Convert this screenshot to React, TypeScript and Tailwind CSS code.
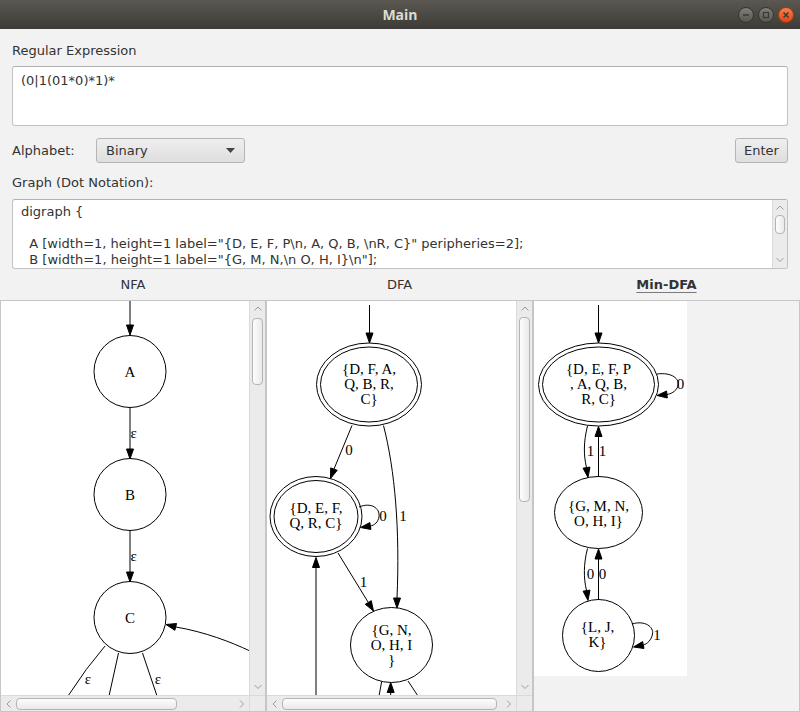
import React from 'react'

const serif = 'Liberation Serif, Times New Roman, serif'

function Arrow({ x, y, dx, dy }: { x: number; y: number; dx: number; dy: number }) {
  const len = Math.hypot(dx, dy)
  const ux = dx / len
  const uy = dy / len
  const bx = x - ux * 10
  const by = y - uy * 10
  const px = -uy * 3.5
  const py = ux * 3.5
  return (
    <polygon
      points={`${x},${y} ${bx + px},${by + py} ${bx - px},${by - py}`}
      fill="black"
      stroke="black"
      strokeWidth={1}
    />
  )
}

function Label({ x, y, children, anchor = 'middle' }: { x: number; y: number; children: React.ReactNode; anchor?: 'middle' | 'start' }) {
  return (
    <text x={x} y={y} textAnchor={anchor} fontFamily={serif} fontSize={15} fill="black" stroke="none">
      {children}
    </text>
  )
}

function Lines({ x, y, lines }: { x: number; y: number; lines: string[] }) {
  return (
    <>
      {lines.map((l, i) => (
        <Label key={i} x={x} y={y + i * 15}>{l}</Label>
      ))}
    </>
  )
}

function Chevron({ dir }: { dir: 'up' | 'down' | 'left' | 'right' }) {
  const pts = {
    up: '0.5,4.5 4,1 7.5,4.5',
    down: '0.5,1 4,4.5 7.5,1',
    left: '4.5,0.5 1,4 4.5,7.5',
    right: '1,0.5 4.5,4 1,7.5',
  }[dir]
  const vertical = dir === 'up' || dir === 'down'
  return (
    <svg width={vertical ? 8 : 6} height={vertical ? 6 : 8}>
      <polyline points={pts} fill="none" stroke="#9c9c9c" strokeWidth={1} />
    </svg>
  )
}

function VScroll({ thumb, outer = 'w-[16px]' }: { thumb: string; outer?: string }) {
  return (
    <div className={`${outer} h-full shrink-0 bg-[#ebebeb] border-l border-[#dadada] flex flex-col items-center`}>
      <div className="h-[16px] flex items-center justify-center"><Chevron dir="up" /></div>
      <div className={`rounded-[4px] border border-[#b4b4b4] bg-gradient-to-r from-[#fdfdfd] to-[#e9e9e9] ${thumb}`} />
      <div className="flex-1" />
      <div className="h-[16px] flex items-center justify-center"><Chevron dir="down" /></div>
    </div>
  )
}

function HScroll({ width, thumb }: { width: string; thumb: string }) {
  return (
    <div className={`${width} h-[16px] bg-[#ebebeb] border-t border-[#dadada] flex items-center`}>
      <div className="w-[15px] flex items-center justify-center"><Chevron dir="left" /></div>
      <div className={`h-[12px] rounded-[4px] border border-[#b4b4b4] bg-gradient-to-b from-[#fdfdfd] to-[#e9e9e9] ${thumb}`} />
      <div className="flex-1" />
      <div className="w-[15px] flex items-center justify-center"><Chevron dir="right" /></div>
    </div>
  )
}

function NfaGraph() {
  return (
    <svg width={248} height={394} viewBox="1 301 248 394" stroke="black" fill="none">
      <path d="M130 301 L130 325" />
      <Arrow x={130} y={335} dx={0} dy={1} />
      <circle cx={130} cy={371.5} r={36} />
      <Label x={130} y={376.5}>A</Label>

      <path d="M130 407.5 L130 449" />
      <Arrow x={130} y={459} dx={0} dy={1} />
      <Label x={130.5} y={438} anchor="start">ε</Label>
      <circle cx={130} cy={494.5} r={36} />
      <Label x={130} y={499.5}>B</Label>

      <path d="M130 530.5 L130 572" />
      <Arrow x={130} y={582} dx={0} dy={1} />
      <Label x={130.5} y={561} anchor="start">ε</Label>
      <circle cx={130} cy={617.5} r={36} />
      <Label x={130} y={622.5}>C</Label>

      <path d="M250 651 C231 642 205 632 176 627" />
      <Arrow x={166} y={624.5} dx={-10} dy={-2.5} />

      <path d="M105 646 Q86 668 68 696" />
      <Label x={88} y={684}>ε</Label>
      <path d="M118.5 653 L109 696" />
      <path d="M142.5 653 L157 696" />
      <Label x={158} y={684}>ε</Label>
    </svg>
  )
}

function DfaGraph() {
  return (
    <svg width={249} height={394} viewBox="267 301 249 394" stroke="black" fill="none">
      <path d="M369.5 305 L369.5 333" />
      <Arrow x={369.5} y={343} dx={0} dy={1} />
      <ellipse cx={369} cy={384.5} rx={52.5} ry={41.5} />
      <ellipse cx={369} cy={384.5} rx={48.5} ry={37.5} />
      <Lines x={369} y={374} lines={['{D, F, A,', 'Q, B, R,', 'C}']} />

      <path d="M352 425.5 L334 469" />
      <Arrow x={330.5} y={478.5} dx={-3.5} dy={9.5} />
      <Label x={349} y={455}>0</Label>

      <path d="M383.5 425.5 C395 470 400 530 397 598" />
      <Arrow x={397} y={608} dx={0} dy={1} />
      <Label x={403} y={521}>1</Label>

      <ellipse cx={316} cy={516.5} rx={46} ry={40} />
      <ellipse cx={316} cy={516.5} rx={42} ry={36} />
      <Lines x={316} y={513} lines={['{D, E, F,', 'Q, R, C}']} />

      <path d="M359 507 C371 502 380 508 379 516.5 C378.5 522 374 525.5 370.5 526" />
      <Arrow x={360.5} y={527.5} dx={-10} dy={1.5} />
      <Label x={383} y={521}>0</Label>

      <path d="M338 553 L368 602" />
      <Arrow x={373.5} y={611} dx={5.5} dy={9} />
      <Label x={363.5} y={587}>1</Label>

      <path d="M316 695 L316 568" />
      <Arrow x={316} y={557.5} dx={0} dy={-1} />

      <ellipse cx={391.5} cy={645} rx={41} ry={37.5} />
      <Lines x={391.5} y={635} lines={['{G, N,', 'O, H, I', '}']} />

      <path d="M381.7 681.5 L379 696" />
      <path d="M390.7 696 L390.7 692.5" />
      <Arrow x={390.7} y={682.5} dx={0} dy={-1} />
      <path d="M408 681 L418 696" />
    </svg>
  )
}

function MinDfaGraph() {
  return (
    <svg width={153} height={375} viewBox="534 301 153 375" stroke="black" fill="none">
      <path d="M598.5 305 L598.5 333" />
      <Arrow x={598.5} y={343} dx={0} dy={1} />
      <ellipse cx={598.5} cy={384.5} rx={60} ry={41.5} />
      <ellipse cx={598.5} cy={384.5} rx={56} ry={37.5} />
      <Lines x={598.5} y={374} lines={['{D, E, F, P', ', A, Q, B,', 'R, C}']} />

      <path d="M657 374 C672 372 680 379 678 386 C676 392 670 394 667 394.5" />
      <Arrow x={657} y={395.5} dx={-10} dy={1} />
      <Label x={680.5} y={389}>0</Label>

      <path d="M587.5 426 C583.5 442 583.5 455 586.5 467.5" />
      <Arrow x={588} y={477.5} dx={1.5} dy={10} />
      <Label x={590.5} y={456}>1</Label>
      <path d="M598.5 477 L598.5 436.5" />
      <Arrow x={598.5} y={426.5} dx={0} dy={-1} />
      <Label x={602.5} y={456}>1</Label>

      <ellipse cx={598.5} cy={512.5} rx={44} ry={36} />
      <Lines x={598.5} y={510.5} lines={['{G, M, N,', 'O, H, I}']} />

      <path d="M587.5 548.5 C583.5 564 583.5 578 586.5 590.5" />
      <Arrow x={588} y={600.5} dx={1.5} dy={10} />
      <Label x={590.5} y={579}>0</Label>
      <path d="M598.5 600 L598.5 559" />
      <Arrow x={598.5} y={549} dx={0} dy={-1} />
      <Label x={602.5} y={579}>0</Label>

      <circle cx={598.5} cy={635.5} r={36} />
      <Lines x={597.5} y={632} lines={['{L, J,', 'K}']} />

      <path d="M632 624 C645 620 654 627 652.5 634 C651.5 640 647 644 643.5 645" />
      <Arrow x={633.5} y={647} dx={-10} dy={2} />
      <Label x={657} y={640}>1</Label>
    </svg>
  )
}

function WinButton({ kind }: { kind: 'min' | 'max' | 'close' }) {
  const base =
    kind === 'close'
      ? 'bg-gradient-to-b from-[#f5804f] to-[#dc4615] border-[#a93a14]'
      : 'bg-gradient-to-b from-[#807f7a] to-[#57564f] border-[#36352f]'
  return (
    <div className={`w-[16px] h-[16px] rounded-full border flex items-center justify-center ${base}`}>
      <svg width="8" height="8" viewBox="0 0 8 8" stroke="#3a3934" strokeWidth="1.5" fill="none">
        {kind === 'min' && <path d="M1 4 L7 4" />}
        {kind === 'max' && <rect x="1.5" y="1.5" width="5" height="5" strokeWidth="1.2" />}
        {kind === 'close' && <path d="M1.5 1.5 L6.5 6.5 M6.5 1.5 L1.5 6.5" />}
      </svg>
    </div>
  )
}

const dotLines = [
  'digraph {',
  '',
  '  A [width=1, height=1 label="{D, E, F, P\\n, A, Q, B, \\nR, C}" peripheries=2];',
  '  B [width=1, height=1 label="{G, M, N,\\n O, H, I}\\n"];',
]

export default function App() {
  return (
    <div className="w-[800px] h-[712px] bg-[#f2f2f2] flex flex-col overflow-hidden font-['DejaVu_Sans',sans-serif] text-[13px] text-[#333333]">
      {/* Title bar */}
      <div className="h-[29px] shrink-0 grid grid-cols-[1fr_auto_1fr] items-center bg-gradient-to-b from-[#5b5852] to-[#3c3b37]">
        <div />
        <span className="font-bold text-[14px] text-[#dfdbd2] font-['Open_Sans',sans-serif]">Main</span>
        <div className="flex justify-end gap-[4px] pr-[6px]">
          <WinButton kind="min" />
          <WinButton kind="max" />
          <WinButton kind="close" />
        </div>
      </div>

      {/* Form */}
      <div className="px-3 pt-[13px] shrink-0">
        <div className="leading-[17px]">Regular Expression</div>
        <div className="mt-[7px] h-[60px] bg-white border border-[#c2c2c2] border-t-[#b0b0b0] rounded-[3px] pl-[8px] pt-[6px] leading-[16px]">
          (0|1(01*0)*1)*
        </div>

        <div className="mt-[12px] h-[25px] flex items-center">
          <span className="w-[84px]">Alphabet:</span>
          <div className="w-[149px] h-[25px] flex items-center justify-between pl-[9px] pr-[9px] rounded-[3px] border border-[#b5b5b5] bg-gradient-to-b from-[#efefef] to-[#dedede]">
            <span>Binary</span>
            <svg width="9" height="5" viewBox="0 0 9 5"><polygon points="0,0 9,0 4.5,5" fill="#444" /></svg>
          </div>
          <div className="flex-1" />
          <button className="w-[53px] h-[25px] rounded-[3px] border border-[#b5b5b5] bg-gradient-to-b from-[#efefef] to-[#dedede] text-[13px] text-[#333]">
            Enter
          </button>
        </div>

        <div className="mt-[11px] leading-[17px]">Graph (Dot Notation):</div>
        <div className="mt-[8px] h-[70px] bg-white border border-[#c2c2c2] border-t-[#b0b0b0] rounded-[3px] flex overflow-hidden">
          <div className="flex-1 pl-[8px] pt-[4px] leading-[16px] whitespace-pre overflow-hidden">
            {dotLines.map((l, i) => (
              <div key={i} className="h-[16px]">{l}</div>
            ))}
          </div>
          <VScroll outer="w-[15px]" thumb="w-[10px] h-[19px] -mt-[1px]" />
        </div>
      </div>

      {/* Tab labels */}
      <div className="h-[31px] shrink-0 grid grid-cols-[266px_267px_267px] items-center text-center">
        <span>NFA</span>
        <span>DFA</span>
        <span className="font-bold underline decoration-[#7a7a7a] underline-offset-[3px]">Min-DFA</span>
      </div>

      {/* Graph panels */}
      <div className="flex-1 grid grid-cols-[266px_267px_267px]">
        <div className="border border-[#c6c6c6] flex flex-col bg-[#ebebeb]">
          <div className="flex h-[394px]">
            <div className="w-[248px] bg-white overflow-hidden"><NfaGraph /></div>
            <VScroll thumb="w-[11px] h-[67px] mt-[1px]" />
          </div>
          <div className="flex">
            <HScroll width="w-[248px]" thumb="w-[161px]" />
            <div className="w-[16px] h-[16px] bg-[#ebebeb] border-t border-l border-[#dadada]" />
          </div>
        </div>

        <div className="border border-[#c6c6c6] flex flex-col bg-[#ebebeb]">
          <div className="flex h-[394px]">
            <div className="w-[249px] bg-white overflow-hidden"><DfaGraph /></div>
            <VScroll thumb="w-[11px] h-[185px]" />
          </div>
          <div className="flex">
            <HScroll width="w-[249px]" thumb="w-[215px]" />
            <div className="w-[16px] h-[16px] bg-[#ebebeb] border-t border-l border-[#dadada]" />
          </div>
        </div>

        <div className="border border-[#c6c6c6] bg-[#f2f2f2]">
          <div className="w-[153px] h-[375px] bg-white overflow-hidden"><MinDfaGraph /></div>
        </div>
      </div>
    </div>
  )
}
